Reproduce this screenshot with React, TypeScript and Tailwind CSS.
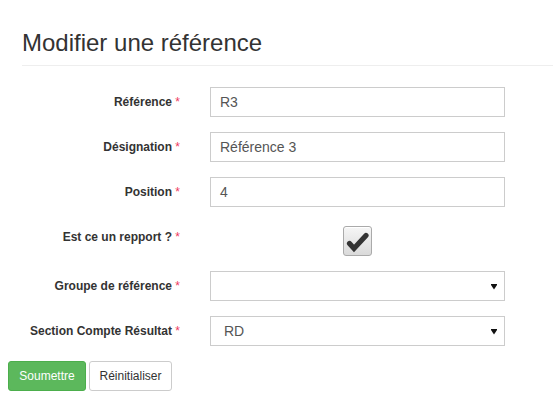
import type { ReactNode } from "react";

function Req() {
  return <span className="text-[#ee3a5e] font-normal"> *</span>;
}

function Row({ label, children, tall }: { label: string; children: ReactNode; tall?: boolean }) {
  return (
    <div className={`flex items-start ${tall ? "h-[34px]" : "h-[30px]"}`}>
      <label className="w-[172px] text-right text-[12px] font-bold leading-[30px] text-[#333]">
        {label}
        <Req />
      </label>
      <div className="ml-[30px] w-[295px]">{children}</div>
    </div>
  );
}

function TextInput({ value }: { value: string }) {
  return (
    <div className="h-[30px] border border-[#ccc] bg-white pl-[9px] text-[14px] leading-[28px] text-[#555]">
      {value}
    </div>
  );
}

function Select({ value }: { value?: string }) {
  return (
    <div className="flex h-[30px] items-center justify-between border border-[#ccc] bg-white pl-[13px] pr-[7px] text-[14px] text-[#555]">
      <span>{value}</span>
      <svg width="6" height="6" viewBox="0 0 6 6" className="mt-[1px]">
        <polygon points="0,0 6,0 6,1 3,5.5 0,1" fill="#111" />
      </svg>
    </div>
  );
}

export default function App() {
  return (
    <div className="h-[405px] w-[560px] bg-white pl-[8px] pr-[7px] font-['Liberation_Sans',Arial,sans-serif]">
      <div className="ml-[14px] border-b border-[#eee] pt-[30px] pb-[9px]">
        <h3 className="text-[24px] font-normal leading-[26px] text-[#333]">Modifier une référence</h3>
      </div>

      <form className="mt-[21px] flex flex-col gap-[15px]">
        <Row label="Référence">
          <TextInput value="R3" />
        </Row>
        <Row label="Désignation">
          <TextInput value="Référence 3" />
        </Row>
        <Row label="Position">
          <TextInput value="4" />
        </Row>
        <Row label="Est ce un repport ?" tall>
          <div className="flex justify-center pt-[4px]">
            <div className="h-[30px] w-[29px] rounded-[3px] border border-[#aaa] bg-gradient-to-b from-[#f6f6f6] to-[#dadada] shadow-[inset_0_1px_0_#fff]">
              <svg width="27" height="28" viewBox="0 0 27 28">
                <polyline
                  points="5.5,16.5 10,21.5 22,8.5"
                  fill="none"
                  stroke="#333"
                  strokeWidth="5.2"
                  strokeLinecap="round"
                  strokeLinejoin="miter"
                />
              </svg>
            </div>
          </div>
        </Row>
        <Row label="Groupe de référence">
          <Select />
        </Row>
        <Row label="Section Compte Résultat">
          <Select value="RD" />
        </Row>

        <div className="flex gap-[3px]">
          <button
            type="button"
            className="h-[30px] w-[78px] rounded-[3px] border border-[#4cae4c] bg-[#5cb85c] text-[12px] text-white"
          >
            Soumettre
          </button>
          <button
            type="button"
            className="h-[30px] w-[83px] rounded-[3px] border border-[#ccc] bg-white text-[12px] text-[#333]"
          >
            Réinitialiser
          </button>
        </div>
      </form>
    </div>
  );
}
